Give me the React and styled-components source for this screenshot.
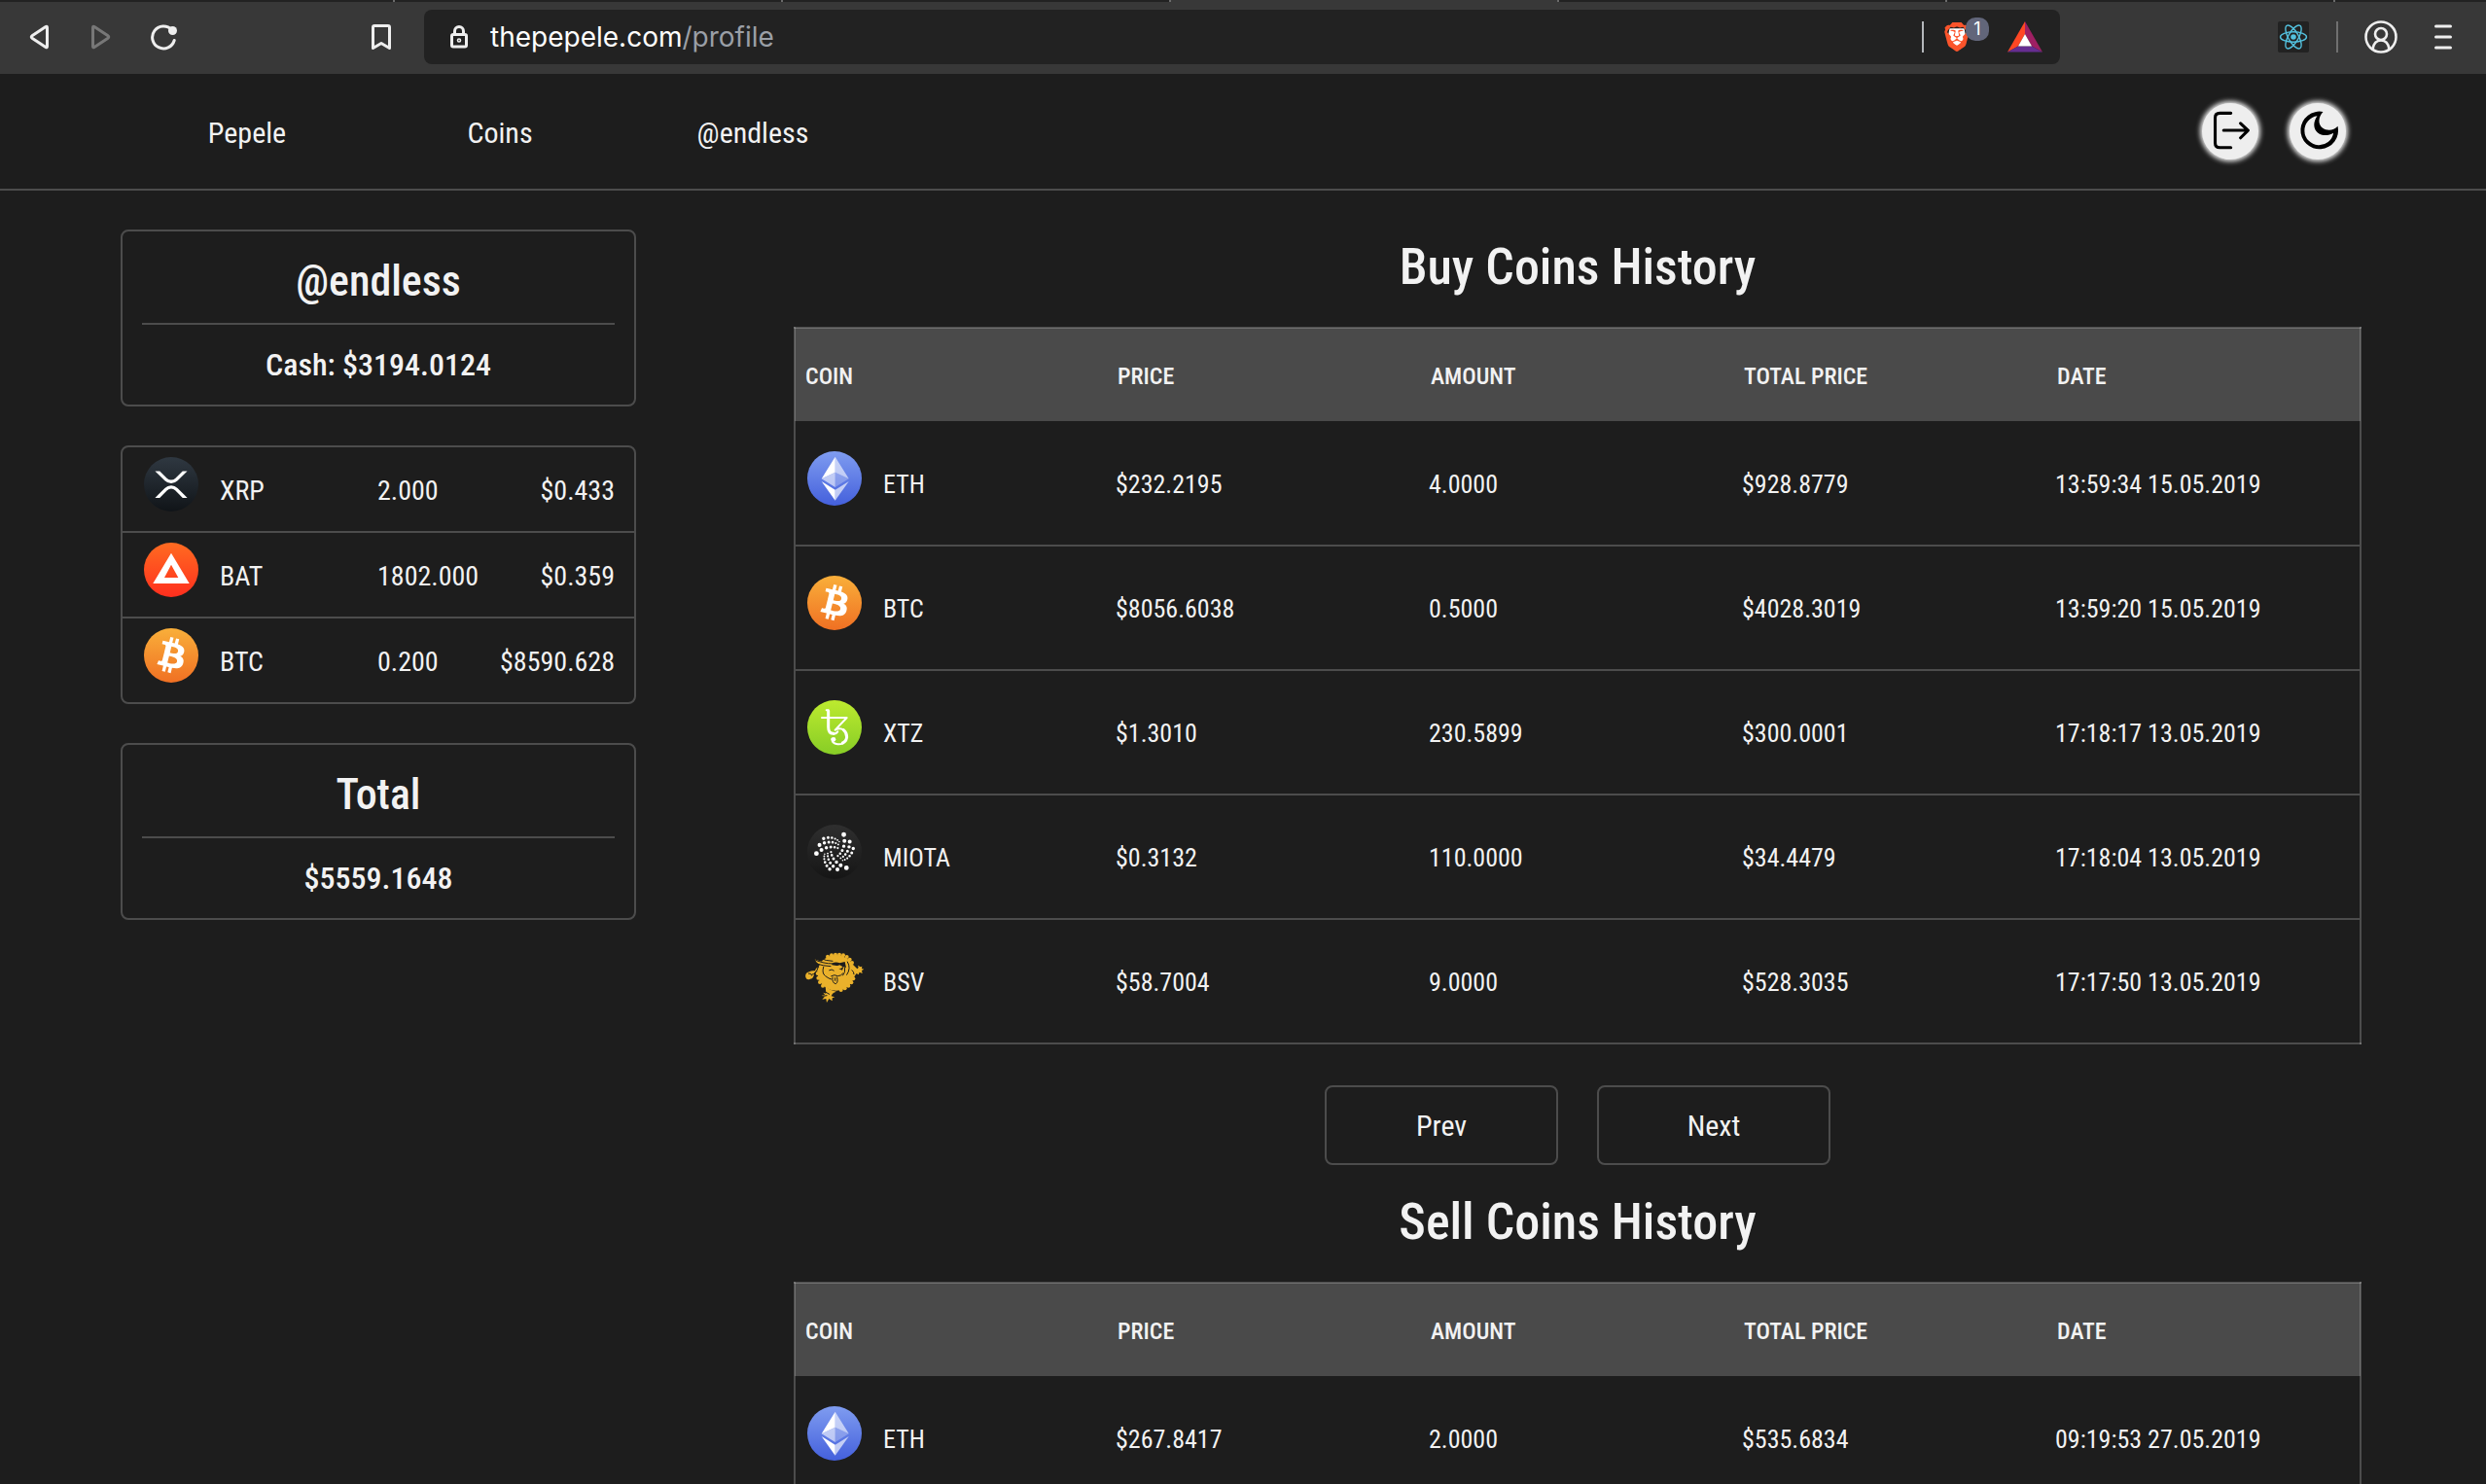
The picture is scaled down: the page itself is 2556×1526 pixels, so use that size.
import React from "react";
import styled, { createGlobalStyle, css } from "styled-components";
import { SiBrave, SiIota } from "react-icons/si";

const color = {
  page: "#1d1d1d",
  toolbar: "#383838",
  field: "#222222",
  line: "rgba(255, 255, 255, 0.21)",
  head: "#4a4a4a",
  text: "#f2f2f2",
};

const GlobalStyle = createGlobalStyle`
  * { box-sizing: border-box; }
  body {
    margin: 0;
    background: ${color.page};
    color: ${color.text};
    font-family: "Roboto Condensed", "Liberation Sans", sans-serif;
    font-size: 26px;
  }
`;

const Window = styled.div`
  display: flex;
  flex-direction: column;
  height: 100vh;
`;

/* ---------- browser chrome ---------- */

const TabStrip = styled.div`
  display: flex;
  flex: none;
  height: 2px;
  padding-left: 7px;
  background: ${color.field};
`;

const TabEdge = styled.div`
  width: 399px;
  border-right: 2px solid #6b6b6b;
  background: ${(p) => (p.$active ? color.toolbar : "transparent")};
`;

const Toolbar = styled.div`
  display: flex;
  align-items: center;
  flex: none;
  height: 74px;
  padding: 0 24px 2px 20px;
  background: ${color.toolbar};
`;

const ToolGroup = styled.div`
  display: flex;
  align-items: center;
  gap: 24px;
`;

const LeftTools = styled(ToolGroup)`
  justify-content: space-between;
  width: 392px;
  margin-right: 24px;
`;

const RightTools = styled(ToolGroup)`
  justify-content: flex-end;
  width: 414px;
`;

const bareButton = css`
  display: flex;
  align-items: center;
  justify-content: center;
  padding: 0;
  border: 0;
  background: none;
  color: #eeeeee;
`;

const ToolButton = styled.button`
  ${bareButton}
  width: 40px;
  height: 40px;
  opacity: ${(p) => (p.disabled ? 0.35 : 1)};
`;

const Divider = styled.span`
  width: 2px;
  height: 32px;
  background: ${(p) => (p.$bright ? "#b4b7bb" : "#707070")};
`;

const AddressBar = styled.div`
  display: flex;
  align-items: center;
  flex: 1;
  height: 56px;
  padding: 0 18px 0 16px;
  border-radius: 8px;
  background: ${color.field};
`;

const Address = styled.div`
  flex: 1;
  margin-left: 12px;
  font-family: Inter, "Liberation Sans", sans-serif;
  font-size: 28px;
  color: #9a9fa6;
  outline: none;
`;

const Host = styled.span`
  color: #ffffff;
`;

const ShieldButton = styled.button`
  ${bareButton}
  position: relative;
  width: 30px;
  height: 40px;
  margin: 0 37px 0 19px;
`;

const Badge = styled.span`
  position: absolute;
  top: 0;
  left: 24px;
  width: 24px;
  border-radius: 10px;
  background: #62667a;
  color: #ffffff;
  font: 18px/24px Inter, "Liberation Sans", sans-serif;
  text-align: center;
`;

const RewardsButton = styled.button`
  ${bareButton}
`;

/* ---------- site header ---------- */

const Header = styled.header`
  display: flex;
  align-items: center;
  justify-content: space-between;
  flex: none;
  height: 120px;
  padding: 0 144px 0 124px;
  border-bottom: 2px solid ${color.line};
`;

const Nav = styled.nav`
  display: flex;
  padding-top: 2px;
`;

const NavLink = styled.a`
  width: 260px;
  color: inherit;
  font-size: 30px;
  text-align: center;
  text-decoration: none;
`;

const Actions = styled.div`
  display: flex;
  gap: 32px;
`;

const RoundButton = styled.button`
  ${bareButton}
  width: 58px;
  height: 58px;
  border-radius: 50%;
  background: #eeeeee;
  box-shadow: 0 0 5px 2px #eeeeee;
  color: #000000;
`;

/* ---------- page ---------- */

const Page = styled.main`
  display: grid;
  grid-template-columns: 530px minmax(0, 1fr);
  gap: 162px;
  align-items: start;
  flex: 1;
  min-height: 0;
  padding: 20px 128px 0 124px;
  overflow: auto;
  scrollbar-width: none;
`;

const Sidebar = styled.aside`
  display: flex;
  flex-direction: column;
  gap: 40px;
  padding-top: 20px;
`;

const Card = styled.section`
  padding: ${(p) => (p.$flush ? "0" : "0 20px")};
  border: 2px solid ${color.line};
  border-radius: 8px;
  text-align: center;
`;

const CardTitle = styled.h2`
  margin: 0;
  padding-top: 8px;
  border-bottom: 2px solid ${color.line};
  font-size: 44px;
  font-weight: 500;
  line-height: 86px;
`;

const CardValue = styled.p`
  margin: 0;
  font-size: 32px;
  font-weight: 500;
  line-height: 82px;
`;

const Holdings = styled.table`
  width: 100%;
  border-spacing: 0;
  font-size: 28px;
`;

const HoldingCell = styled.td`
  width: ${(p) => p.$width || "auto"};
  height: 88px;
  padding: 2px 20px 0 ${(p) => (p.$first ? "20px" : "0")};
  border-bottom: 2px solid ${color.line};
  text-align: ${(p) => (p.$end ? "right" : "left")};
  tr:last-child > & {
    height: 86px;
    border-bottom: 0;
  }
`;

const History = styled.section`
  display: flex;
  flex-direction: column;
`;

const Title = styled.h1`
  margin: 0 0 2px;
  font-size: 52px;
  font-weight: 500;
  line-height: 118px;
  text-align: center;
`;

const Trades = styled.table`
  width: 100%;
  table-layout: fixed;
  border: 2px solid ${color.line};
  border-collapse: collapse;
  text-align: left;
`;

const HeadRow = styled.tr`
  height: 96px;
  background: ${color.head};
`;

const HeadCell = styled.th`
  padding: 2px 8px 0 10px;
  font-size: 24px;
  font-weight: 500;
  text-transform: uppercase;
`;

const TradeRow = styled.tr`
  height: 128px;
  & + & {
    border-top: 2px solid ${color.line};
  }
`;

const TradeCell = styled.td`
  padding: 2px 8px 0;
`;

const Coin = styled.span`
  display: flex;
  align-items: center;
  gap: 22px;
`;

const CoinIcon = styled.svg`
  flex: none;
  width: 56px;
  height: 56px;
  margin: 0 0 12px ${(p) => p.$inset}px;
  overflow: visible;
`;

const Pager = styled.div`
  display: flex;
  justify-content: center;
  gap: 40px;
  padding-top: 42px;
`;

const PagerButton = styled.button`
  width: 240px;
  height: 82px;
  border: 2px solid ${color.line};
  border-radius: 8px;
  background: none;
  color: inherit;
  font: inherit;
  font-size: 30px;
`;

/* ---------- drawings ---------- */

const gradients = {
  ETH: ["#7f9cf0", "#4460dc"],
  BTC: ["#f9af3a", "#f07023"],
  BAT: ["#ff6b21", "#ff2f1e"],
  XRP: ["#2f3841", "#101418"],
  XTZ: ["#bdea2f", "#87cd26"],
  MIOTA: ["#2f2f2f", "#151515"],
};

const glyphs = {
  ETH: (
    <g fill="#fff">
      <path d="M28.7 5.7 14.7 28.3 28.7 21.7z" />
      <path opacity=".6" d="M28.7 5.7v16l14 6.6z" />
      <path opacity=".6" d="M28.7 21.7 14.7 28.3l14 8.7z" />
      <path opacity=".25" d="M28.7 21.7v15.3l14-8.7z" />
      <path d="M14.7 31l14 19.7v-11z" />
      <path opacity=".65" d="M42.7 31l-14 19.7v-11z" />
    </g>
  ),
  BTC: (
    <path
      fill="#fff"
      transform="translate(28 28) scale(1.86) translate(-16 -16.2)"
      d="M23.189 14.02c.314-2.096-1.283-3.223-3.465-3.975l.708-2.84-1.728-.43-.69 2.765c-.454-.114-.92-.22-1.385-.326l.695-2.783L15.596 6l-.708 2.839c-.376-.086-.746-.17-1.104-.26l.002-.009-2.384-.595-.46 1.846s1.283.294 1.256.312c.7.175.826.638.805 1.006l-.806 3.235c.048.012.11.03.18.057l-.183-.045-1.13 4.532c-.086.212-.303.531-.793.41.018.025-1.256-.313-1.256-.313l-.858 1.978 2.25.561c.418.105.828.215 1.231.318l-.715 2.872 1.727.43.708-2.84c.472.127.93.245 1.378.357l-.706 2.828 1.728.43.715-2.866c2.948.558 5.164.333 6.097-2.333.752-2.146-.037-3.385-1.588-4.192 1.13-.26 1.98-1.003 2.207-2.538zm-3.95 5.538c-.533 2.147-4.148.986-5.32.695l.95-3.805c1.172.293 4.929.872 4.37 3.11zm.535-5.569c-.487 1.953-3.495.96-4.47.717l.86-3.45c.975.243 4.118.696 3.61 2.733z"
    />
  ),
  BAT: (
    <path
      fill="#fff"
      fillRule="evenodd"
      d="M28 10.7 46.7 42H9.3zM28 22.7 21 36h14.3z"
    />
  ),
  XRP: (
    <path
      fill="#fff"
      transform="translate(28 28) scale(1.66) translate(-16 -16.2)"
      d="M23.07 8h2.89l-6.015 5.957a5.621 5.621 0 01-7.89 0L6.035 8H8.93l4.57 4.523a3.556 3.556 0 004.996 0L23.07 8zM8.895 24.563H6l6.055-5.993a5.621 5.621 0 017.89 0L26 24.562h-2.895L18.5 20a3.556 3.556 0 00-4.996 0l-4.61 4.563z"
    />
  ),
  XTZ: (
    <g
      transform="scale(.3333) translate(-90 -473)"
      fill="none"
      stroke="#fff"
      strokeLinecap="round"
      strokeLinejoin="round"
    >
      <path strokeWidth="6" d="M149 503.500h6M135 527h77L176 565q16-8 26 0" />
      <path strokeWidth="9" d="M155 506v50q0 20 16 20" />
      <path strokeWidth="6" d="M171 577q9 0 13-7" />
      <path strokeWidth="9" d="M202 565q10 8 10 22-2 14-13 18" />
      <path strokeWidth="6" d="M199 607q-9 3-19 1-14-3-14-16" />
      <circle cx="171" cy="594" r="7" fill="#fff" stroke="none" />
    </g>
  ),
  MIOTA: <SiIota x="7" y="7" size={42} color="#fff" />,
};

/* Small bumps that run along the dragon's mane and back. */
const scales = [
  [153, 1254], [165, 1250], [177, 1248], [189, 1248], [201, 1250], [212, 1255],
  [221, 1263], [228, 1273], [122, 1306], [124, 1320], [129, 1333], [138, 1344],
  [232, 1322], [226, 1334], [217, 1344], [206, 1352], [194, 1357],
];

function Dragon({ inset }) {
  return (
    <CoinIcon $inset={inset} viewBox="90 1231 168 168" aria-hidden="true">
      <g fill="#eab12b">
        <ellipse cx="179" cy="1304" rx="57" ry="55" />
        {scales.map(([x, y]) => (
          <circle key={`${x}-${y}`} cx={x} cy={y} r="6" />
        ))}
        <path d="M226 1274l18 18 4-4-2-7 8 5 5-2-1 7 7 2-7 4 2 9-9-4-3 8-6-4-9 12-12 4z" />
        <path d="M146 1346q16 14 34 16-14 4-16 14l11 3-8 3 0 9-10-7-7 12-2-12-12 2 7-8-9-4 11-1-6-8 9 3z" />
        <path d="M128 1286q-12 2-14 12-10-2-18 3-14 4-11 17 4 10 14 5 12-2 12-18l6-5 10-2z" />
        <path d="M112 1262q28 12 62 12l-4 12-40-6q-12-6-18-18z" />
      </g>
      <g fill="none" stroke="#1d1d1d" strokeWidth="3" strokeLinecap="round">
        <path d="M110 1262q26 14 60 14M116 1275q22 8 46 9M128 1258q20 10 40 10" />
        <path d="M124 1286q-6 20-20 24M94 1306q9-2 10 6M214 1270q12 20-2 40" />
        <path d="M140 1286q-6 20 6 28 10 8 18 10M206 1288q2 16-6 24" />
        <path d="M158 1296q8-5 14 1M164 1314q10-6 20 0 10 0 16-8" />
        <path d="M168 1318q-2 18 10 20 8-4 4-20M176 1320v8" />
        <path d="M228 1296q6 4 6 12M148 1364l10 6M140 1376l10-2" />
      </g>
      <path d="M166 1275q12-7 24-1l16-4 4 18-8-2-4 10-10-4 4-8-12-2-14-2z" fill="#1d1d1d" />
      <path d="M178 1284l12-4 10 6-8 6z" fill="#eab12b" />
    </CoinIcon>
  );
}

function CoinLogo({ code, inset }) {
  if (code === "BSV") return <Dragon inset={inset} />;
  const id = `fill-${code}`;
  const [top, bottom] = gradients[code];
  return (
    <CoinIcon $inset={inset} viewBox="0 0 56 56" aria-hidden="true">
      <defs>
        <linearGradient id={id} x1="0" y1="0" x2="0" y2="1">
          <stop offset="0" stopColor={top} />
          <stop offset="1" stopColor={bottom} />
        </linearGradient>
      </defs>
      <circle cx="28" cy="28" r="28" fill={`url(#${id})`} />
      {glyphs[code]}
    </CoinIcon>
  );
}

const Line = ({ w, h, width = 3, children }) => (
  <svg
    width={w}
    height={h}
    viewBox={`0 0 ${w} ${h}`}
    fill="none"
    stroke="currentColor"
    strokeWidth={width}
    strokeLinecap="round"
    strokeLinejoin="round"
    aria-hidden="true"
  >
    {children}
  </svg>
);

function BrowserChrome() {
  return (
    <>
      <TabStrip>
        <TabEdge />
        <TabEdge />
        <TabEdge />
        <TabEdge $active />
        <TabEdge />
        <TabEdge />
      </TabStrip>
      <Toolbar>
        <LeftTools>
          <ToolGroup>
            <ToolButton aria-label="Back">
              <Line w={20} h={26}>
                <path d="M17 2.5q1.500-1 1.500 1v19q0 2-1.500 1L3 14.200q-1.500-1.200 0-2.400z" />
              </Line>
            </ToolButton>
            <ToolButton aria-label="Forward" disabled>
              <Line w={20} h={26}>
                <path d="M3 2.500q-1.500-1-1.500 1v19q0 2 1.500 1L17 14.200q1.500-1.200 0-2.400z" />
              </Line>
            </ToolButton>
            <ToolButton aria-label="Reload">
              <Line w={28} h={28}>
                <path d="M22.500 6.500A11.500 11.500 0 1 0 25.200 17.500" />
                <circle cx="23.500" cy="7.500" r="4.500" fill="currentColor" stroke="none" />
              </Line>
            </ToolButton>
          </ToolGroup>
          <ToolButton aria-label="Bookmark this page">
            <Line w={20} h={26}>
              <path d="M1.500 24.500V3q0-1.500 1.500-1.500h14q1.500 0 1.500 1.500v21.500L10 19.500z" />
            </Line>
          </ToolButton>
        </LeftTools>
        <AddressBar>
          <ToolButton aria-label="Site information">
            <Line w={20} h={24}>
              <rect x="2.500" y="9.500" width="15" height="12.500" rx="1.500" />
              <path d="M5.500 9V6a4.500 4.500 0 0 1 9 0v3" />
              <circle cx="10" cy="15.500" r=".8" />
            </Line>
          </ToolButton>
          <Address
            role="textbox"
            aria-label="Address"
            contentEditable
            suppressContentEditableWarning
            spellCheck={false}
          >
            <Host>thepepele.com</Host>/profile
          </Address>
          <Divider $bright />
          <ShieldButton aria-label="Shields, 1 item blocked">
            <svg width="36" height="36" viewBox="0 0 24 24" aria-hidden="true">
              <path fill="#fff" d="M6 5h12l1 5-3 8-4 3-4-3-3-8z" />
              <SiBrave size={24} color="#fb542b" />
            </svg>
            <Badge>1</Badge>
          </ShieldButton>
          <RewardsButton aria-label="Rewards">
            <svg width="36" height="32" viewBox="0 0 36 32" aria-hidden="true">
              <path fill="#ff4724" d="M18 0 0 31.500 11 25.500 18 13z" />
              <path fill="#9e1f63" d="M18 0 36 31.500 25 25.500 18 13z" />
              <path fill="#662d91" d="M0 31.500h36L25 25.500H11z" />
              <path fill="#fff" d="M18 13 25 25.500H11z" />
            </svg>
          </RewardsButton>
        </AddressBar>
        <RightTools>
          <ToolButton aria-label="React developer tools">
            <svg width="32" height="32" viewBox="-16 -16 32 32" aria-hidden="true">
              <rect x="-16" y="-16" width="32" height="32" rx="2" fill="#222" />
              <circle r="2.800" fill="#53c1de" />
              <g fill="none" stroke="#53c1de" strokeWidth="1.400">
                <ellipse rx="13.500" ry="5.200" />
                <ellipse rx="13.500" ry="5.200" transform="rotate(60)" />
                <ellipse rx="13.500" ry="5.200" transform="rotate(120)" />
              </g>
            </svg>
          </ToolButton>
          <Divider />
          <ToolButton aria-label="Account">
            <Line w={34} h={34} width={2.6}>
              <circle cx="17" cy="17" r="15.500" />
              <circle cx="17" cy="14" r="6" />
              <path d="M8.500 29.500C9.500 23 13 20.500 17 20.500S24.500 23 25.500 29.500" />
            </Line>
          </ToolButton>
          <ToolButton aria-label="Menu">
            <Line w={18} h={26}>
              <path d="M1.500 2h15M1.500 13h15M1.500 24h15" />
            </Line>
          </ToolButton>
        </RightTools>
      </Toolbar>
    </>
  );
}

function SiteHeader() {
  return (
    <Header>
      <Nav>
        <NavLink href="#pepele">Pepele</NavLink>
        <NavLink href="#coins">Coins</NavLink>
        <NavLink href="#profile">@endless</NavLink>
      </Nav>
      <Actions>
        <RoundButton aria-label="Log out">
          <Line w={60} h={60} width={3.2}>
            <path d="M30.700 10.700H19q-5 0-5 5v26.600q0 5 5 5h11.700M23 29h26M41 21.500l8 7.500-8 8" />
          </Line>
        </RoundButton>
        <RoundButton aria-label="Dark theme">
          <svg width="60" height="60" viewBox="0 0 60 60" aria-hidden="true">
            <path
              fillRule="evenodd"
              d="M35.700 9.300A20 20 0 1 0 51.300 24.500C47 29.500 40 30 35 26.500 30 22.500 30.500 14.500 35.700 9.300zM29.500 13.800C25 20 25 27.500 30 31.500 35 35.500 42 34.500 46.700 31.700A15.500 15.500 0 1 1 29.500 13.800z"
            />
          </svg>
        </RoundButton>
      </Actions>
    </Header>
  );
}

const holdings = [
  ["XRP", "2.000", "$0.433"],
  ["BAT", "1802.000", "$0.359"],
  ["BTC", "0.200", "$8590.628"],
];

const bought = [
  ["ETH", "$232.2195", "4.0000", "$928.8779", "13:59:34 15.05.2019"],
  ["BTC", "$8056.6038", "0.5000", "$4028.3019", "13:59:20 15.05.2019"],
  ["XTZ", "$1.3010", "230.5899", "$300.0001", "17:18:17 13.05.2019"],
  ["MIOTA", "$0.3132", "110.0000", "$34.4479", "17:18:04 13.05.2019"],
  ["BSV", "$58.7004", "9.0000", "$528.3035", "17:17:50 13.05.2019"],
];

const sold = [["ETH", "$267.8417", "2.0000", "$535.6834", "09:19:53 27.05.2019"]];

const columns = ["Coin", "Price", "Amount", "Total price", "Date"];

function TradeTable({ rows }) {
  return (
    <Trades>
      <thead>
        <HeadRow>
          {columns.map((name) => (
            <HeadCell key={name} scope="col">{name}</HeadCell>
          ))}
        </HeadRow>
      </thead>
      <tbody>
        {rows.map(([code, ...values]) => (
          <TradeRow key={values.join()}>
            <TradeCell>
              <Coin><CoinLogo code={code} inset={4} />{code}</Coin>
            </TradeCell>
            {values.map((value) => (
              <TradeCell key={value}>{value}</TradeCell>
            ))}
          </TradeRow>
        ))}
      </tbody>
    </Trades>
  );
}

export default function App() {
  return (
    <Window>
      <GlobalStyle />
      <BrowserChrome />
      <SiteHeader />
      <Page>
        <Sidebar>
          <Card>
            <CardTitle>@endless</CardTitle>
            <CardValue>Cash: $3194.0124</CardValue>
          </Card>
          <Card $flush>
            <Holdings>
              <tbody>
                {holdings.map(([code, amount, price]) => (
                  <tr key={code}>
                    <HoldingCell $first $width="262px">
                      <Coin><CoinLogo code={code} inset={2} />{code}</Coin>
                    </HoldingCell>
                    <HoldingCell>{amount}</HoldingCell>
                    <HoldingCell $end>{price}</HoldingCell>
                  </tr>
                ))}
              </tbody>
            </Holdings>
          </Card>
          <Card>
            <CardTitle>Total</CardTitle>
            <CardValue>$5559.1648</CardValue>
          </Card>
        </Sidebar>
        <History>
          <Title>Buy Coins History</Title>
          <TradeTable rows={bought} />
          <Pager>
            <PagerButton>Prev</PagerButton>
            <PagerButton>Next</PagerButton>
          </Pager>
          <Title>Sell Coins History</Title>
          <TradeTable rows={sold} />
        </History>
      </Page>
    </Window>
  );
}
